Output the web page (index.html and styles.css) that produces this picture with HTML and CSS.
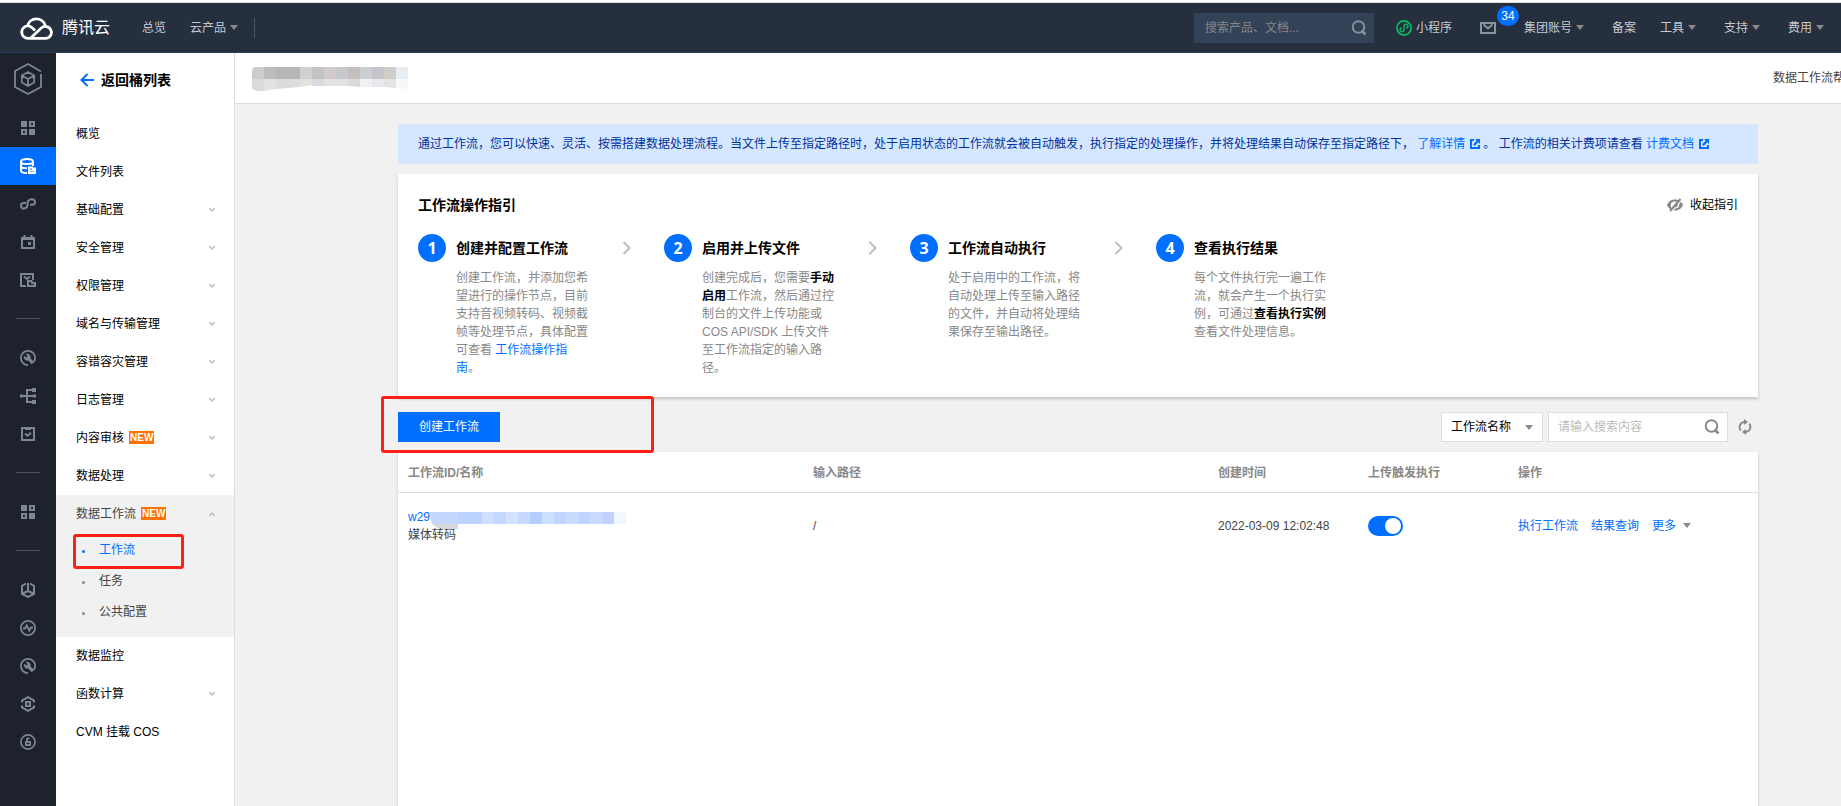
FILE: index.html
```html
<!DOCTYPE html>
<html lang="zh-CN">
<head>
<meta charset="utf-8">
<title>工作流 - 对象存储</title>
<link rel="stylesheet" href="styles.css">
</head>
<body>
<svg class="sprite" aria-hidden="true">
  <symbol id="i-grid" viewBox="0 0 16 16"><path fill="currentColor" d="M1 1h6v6H1zM9 9h6v6H9z"/><path fill="none" stroke="currentColor" stroke-width="2" d="M10 2h4v4h-4zM2 10h4v4H2z"/></symbol>
  <symbol id="i-wrench" viewBox="0 0 16 16"><path fill="none" stroke="currentColor" stroke-width="1.8" d="M8 15.1A7.1 7.1 0 1 1 15.1 8c0 1.500-.5 2.800-1.300 4"/><path fill="currentColor" d="M5.800 4 7.500 6.200 6.300 7.500 4 5.800A3.700 3.700 0 0 0 8.200 10.600l3.500 3.600 2.400-2.300-3.500-3.500A3.700 3.700 0 0 0 5.800 4z"/></symbol>
  <symbol id="i-search" viewBox="0 0 16 16"><circle cx="7.500" cy="7" r="5.800" fill="none" stroke="currentColor" stroke-width="2"/><path fill="none" stroke="currentColor" stroke-width="2.600" d="m10.500 10.500 4 4"/></symbol>
  <symbol id="i-caret" viewBox="0 0 8 5"><path fill="currentColor" d="M0 0h8L4 5z"/></symbol>
  <symbol id="i-down" viewBox="0 0 8 6"><path fill="none" stroke="currentColor" stroke-width="1.500" d="m1.300 1.300 2.700 2.700 2.700-2.700"/></symbol>
  <symbol id="i-ext" viewBox="0 0 10 10"><path fill="currentColor" d="M0 0h4v2H2v6h6V6h2v4H0zM5 0h5v5L8.300 3.300 4.700 6.900 3.100 5.300 6.700 1.700z"/></symbol>
  <symbol id="i-next" viewBox="0 0 9 14"><path fill="none" stroke="currentColor" stroke-width="1.800" d="m1.500 1 6 6-6 6"/></symbol>
</svg>

<header class="topbar">
  <a class="brand" href="#">
    <svg class="brand-mark" viewBox="0 0 33 24" fill="none" stroke="currentColor" stroke-width="2.800"><path d="M15 14.500C12.500 12 11 9.800 8 9.800a6.300 6.300 0 0 0 0 12.600h17.500a6 6 0 1 0-4.200-10.400L10.500 22.200M7.500 9.800A9.200 9.200 0 0 1 25.200 9.500"/></svg>
    <span>腾讯云</span>
  </a>
  <nav class="top-left">
    <a href="#">总览</a>
    <a href="#">云产品<svg class="caret"><use href="#i-caret"/></svg></a>
  </nav>
  <form class="top-search">
    <input type="text" aria-label="搜索" placeholder="搜索产品、文档...">
    <svg class="i16"><use href="#i-search"/></svg>
  </form>
  <nav class="top-right">
    <a class="mini" href="#"><svg class="i16" viewBox="0 0 16 16" fill="none" stroke="#07c160"><circle cx="8" cy="8" r="7.100" stroke-width="1.700"/><path stroke-width="1.300" d="M5.800 7.800a2 2 0 1 0 2.200 2V6.200a2 2 0 1 1 2.200 2"/></svg>小程序</a>
    <a class="mail" href="#" aria-label="消息"><svg class="i16" viewBox="0 0 16 16" fill="none" stroke="#8a949c" stroke-width="2"><path d="M1 3h14v10H1z"/><path d="m3.500 4.500 4.500 4 4.500-4"/></svg><b class="badge">34</b></a>
    <a href="#">集团账号<svg class="caret"><use href="#i-caret"/></svg></a>
    <a href="#">备案</a>
    <a href="#">工具<svg class="caret"><use href="#i-caret"/></svg></a>
    <a href="#">支持<svg class="caret"><use href="#i-caret"/></svg></a>
    <a href="#">费用<svg class="caret"><use href="#i-caret"/></svg></a>
  </nav>
</header>

<div class="shell">
  <nav class="rail" aria-label="产品导航">
    <a class="rail-logo" href="#" aria-label="对象存储"><svg viewBox="0 0 28 32" fill="none" stroke="currentColor" stroke-width="1.800"><path d="M27 11v13l-13 7-13-7V8l13-7 13 7.500"/><path d="m14 9 6.200 3.500v7L14 23l-6.200-3.500v-7zM7.800 12.500 14 16l6.200-3.500M14 16v7"/></svg></a>
    <a href="#" aria-label="概览"><svg class="i16"><use href="#i-grid"/></svg></a>
    <a class="on" href="#" aria-label="存储桶列表"><svg class="i16" viewBox="0 0 16 16" fill="none" stroke="currentColor" stroke-width="2"><path d="M13 8V3.500C13 2 10.500 1 7 1S1 2 1 3.500v9C1 14 3 15 7 15M1 3.500C1 5 3.500 6 7 6s6-1 6-2.500M1 8c0 1.500 2 2.300 6 2.300"/><path d="M9 9.500h3l1 1h2V15H9zM9 12.500h6"/></svg></a>
    <a href="#" aria-label="数据处理"><svg class="i16" viewBox="0 0 16 16" fill="none" stroke="currentColor" stroke-width="2"><path d="M6 7H3.500C2 7 1 8.200 1 9.700 1 11.800 2.800 13 4.700 12.400 6.700 11.800 7.500 11 7.500 9V7c0-2 1-3 3-3.600C12.800 2.800 15 3.800 15 6c0 1.700-1 2.800-2.500 2.800H10"/></svg></a>
    <a href="#" aria-label="日程"><svg class="i16" viewBox="0 0 16 16" fill="none" stroke="currentColor" stroke-width="2"><path d="M2 4h12v10H2zM2 5h12M4.500 1v3M11.500 1v3"/><path fill="currentColor" stroke="none" d="M8 8h3v3H8z"/></svg></a>
    <a href="#" aria-label="数据迁移"><svg class="i16" viewBox="0 0 16 16" fill="none" stroke="currentColor" stroke-width="2"><path d="M13 8V2H1v12h5M4 4.500 7 7l3-2.500"/><path d="M8 9h3.500L12 11h3v3H8z"/></svg></a>
    <hr>
    <a href="#" aria-label="工具"><svg class="i16"><use href="#i-wrench"/></svg></a>
    <a href="#" aria-label="拓扑"><svg class="i16" viewBox="0 0 16 16" fill="none" stroke="currentColor" stroke-width="2"><path d="M2 8h12M12 2H7v12h5"/><path fill="currentColor" stroke="none" d="M12 0h4v4h-4zM13 6.500h3v3h-3zM12 12h4v4h-4zM0 6.500h3v3H0z"/></svg></a>
    <a href="#" aria-label="检查"><svg class="i16" viewBox="0 0 16 16" fill="none" stroke="currentColor" stroke-width="2"><path d="M2 2h12v12H2zM5 3h6"/><path d="m5 7.500 2.500 2.200 3.500-3"/></svg></a>
    <hr>
    <a href="#" aria-label="应用"><svg class="i16"><use href="#i-grid"/></svg></a>
    <hr>
    <a href="#" aria-label="加速"><svg class="i16" viewBox="0 0 16 16" fill="none" stroke="currentColor" stroke-width="2"><path d="M6 1.500 2 3.800v8.200l6 3 6-3V3.800l-4-2.300M8 1v8M8 9l-5.500 2.500M8 9l5.500 2.500"/></svg></a>
    <a href="#" aria-label="监控"><svg class="i16" viewBox="0 0 16 16" fill="none" stroke="currentColor" stroke-width="1.800"><circle cx="8" cy="8" r="7.100"/><path d="M3 8.500h2l1.700-3 2.600 5L11 7.500h2"/></svg></a>
    <a href="#" aria-label="诊断"><svg class="i16"><use href="#i-wrench"/></svg></a>
    <a href="#" aria-label="容器"><svg class="i16" viewBox="0 0 16 16" fill="none" stroke="currentColor" stroke-width="2"><path d="M2 6.500v-2L8 1.200l6 3.300v2M2 9.500v2l6 3.300 6-3.300v-2"/><path d="M6 6h4v4H6z"/></svg></a>
    <a href="#" aria-label="安全"><svg class="i16" viewBox="0 0 16 16" fill="none" stroke="currentColor" stroke-width="1.700"><circle cx="8" cy="8" r="7.100"/><path d="M9.500 4.500H7v3"/><path fill="currentColor" stroke="none" d="M5 7h6v5H5z"/><path stroke="#1e222d" stroke-width="1.200" d="M6.500 9.500h3"/></svg></a>
  </nav>

  <aside class="side">
    <a class="back" href="#"><svg viewBox="0 0 14 14" fill="none" stroke="#006eff" stroke-width="2"><path d="M14 7H2M7.500 1l-6 6 6 6"/></svg>返回桶列表</a>
    <ul class="menu">
      <li><a href="#">概览</a></li>
      <li><a href="#">文件列表</a></li>
      <li><a href="#">基础配置<svg class="fold"><use href="#i-down"/></svg></a></li>
      <li><a href="#">安全管理<svg class="fold"><use href="#i-down"/></svg></a></li>
      <li><a href="#">权限管理<svg class="fold"><use href="#i-down"/></svg></a></li>
      <li><a href="#">域名与传输管理<svg class="fold"><use href="#i-down"/></svg></a></li>
      <li><a href="#">容错容灾管理<svg class="fold"><use href="#i-down"/></svg></a></li>
      <li><a href="#">日志管理<svg class="fold"><use href="#i-down"/></svg></a></li>
      <li><a href="#">内容审核<em class="new">NEW</em><svg class="fold"><use href="#i-down"/></svg></a></li>
      <li><a href="#">数据处理<svg class="fold"><use href="#i-down"/></svg></a></li>
      <li class="open"><a href="#">数据工作流<em class="new">NEW</em><svg class="fold"><use href="#i-down"/></svg></a>
        <ul class="sub">
          <li class="current"><a href="#">工作流</a><span class="mark mark-menu"></span></li>
          <li><a href="#">任务</a></li>
          <li><a href="#">公共配置</a></li>
        </ul>
      </li>
      <li><a href="#">数据监控</a></li>
      <li><a href="#">函数计算<svg class="fold"><use href="#i-down"/></svg></a></li>
      <li><a href="#">CVM 挂载 COS</a></li>
    </ul>
  </aside>

  <main class="main">
    <div class="wide">
      <div class="page-head">
        <svg class="mosaic-title" viewBox="0 0 156 24" role="img" aria-label="存储桶名称">
          <path fill="#cfcccc" d="M4 0h8v12H0V4q0-4 4-4z"/><path fill="#dcdada" d="M0 12h12v12H5q-5-1-5-5z"/>
          <path fill="#bebcbd" d="M12 0h12v12H12z"/><path fill="#b8b7b7" d="M24 0h24v12H24z"/><path fill="#cfd1cf" d="M48 0h12v12H48z"/><path fill="#c2c4c6" d="M60 0h12v12H60z"/><path fill="#d1cbcb" d="M72 0h12v12H72z"/><path fill="#c5c9cc" d="M84 0h12v12H84z"/><path fill="#c4bfbe" d="M96 0h12v12H96z"/><path fill="#cbcfd4" d="M108 0h12v12h-12z"/><path fill="#c6c4cb" d="M120 0h12v12h-12z"/><path fill="#d0ccc8" d="M132 0h12v12h-12z"/><path fill="#e8edf1" d="M144 0h12v12h-12z"/>
          <path fill="#e1e2e2" d="M12 12h12v10l-12 2z"/><path fill="#dcdcdd" d="M24 12h24v8l-24 2z"/><path fill="#e1e1de" d="M48 12h12v6l-12 2z"/><path fill="#d9dcdf" d="M60 12h12v7H60z"/><path fill="#e2e2e4" d="M72 12h24v7H72z"/><path fill="#d9d9d9" d="M96 12h12v8l-12-1z"/><path fill="#f0f1f3" d="M108 12h12v8h-12z"/><path fill="#e8e9ee" d="M120 12h12v8h-12z"/><path fill="#e4e3e2" d="M132 12h12v9l-12-1z"/><path fill="#f7f8fa" d="M144 12h12v10l-12-1z"/>
        </svg>
        <a class="help" href="#">数据工作流帮助文档</a>
      </div>

      <div class="content">
        <p class="notice">通过工作流，您可以快速、灵活、按需搭建数据处理流程。当文件上传至指定路径时，处于启用状态的工作流就会被自动触发，执行指定的处理操作，并将处理结果自动保存至指定路径下， <a href="#">了解详情<svg class="ext"><use href="#i-ext"/></svg></a>。 工作流的相关计费项请查看 <a href="#">计费文档<svg class="ext"><use href="#i-ext"/></svg></a></p>

        <section class="card guide">
          <div class="guide-head">
            <h2>工作流操作指引</h2>
            <button class="hide" type="button"><svg class="i16" viewBox="0 0 16 16"><path fill="#888" d="M8 2.500c3.700 0 6.700 2.200 8 5.500-1.300 3.300-4.300 5.500-8 5.500S1.300 11.300 0 8c1.300-3.300 4.300-5.500 8-5.500z"/><path fill="#fff" d="M8 4.500c1 0 1.500.2 2 .5L4.500 11.500A6 6 0 0 1 4 6.500C5 5 6.300 4.500 8 4.500zM11.800 6c1 2 .5 5.500-3.800 5.500-.5 0-1 0-1.300-.2z"/><path fill="none" stroke="#fff" stroke-width="1.500" d="M15 2.500 4.500 14.500"/><path fill="none" stroke="#888" stroke-width="2" d="M13.500 2 3 14M10.300 7.500 8 10"/></svg>收起指引</button>
          </div>
          <ol class="steps">
            <li>
              <span class="num">1</span><h3>创建并配置工作流</h3><svg class="next"><use href="#i-next"/></svg>
              <p>创建工作流，并添加您希望进行的操作节点，目前支持音视频转码、视频截帧等处理节点，具体配置可查看 <a href="#">工作流操作指南</a>。</p>
            </li>
            <li>
              <span class="num">2</span><h3>启用并上传文件</h3><svg class="next"><use href="#i-next"/></svg>
              <p>创建完成后，您需要<b>手动启用</b>工作流，然后通过控制台的文件上传功能或 COS API/SDK 上传文件至工作流指定的输入路径。</p>
            </li>
            <li>
              <span class="num">3</span><h3>工作流自动执行</h3><svg class="next"><use href="#i-next"/></svg>
              <p>处于启用中的工作流，将自动处理上传至输入路径的文件，并自动将处理结果保存至输出路径。</p>
            </li>
            <li>
              <span class="num">4</span><h3>查看执行结果</h3>
              <p>每个文件执行完一遍工作流，就会产生一个执行实例，可通过<b>查看执行实例</b>查看文件处理信息。</p>
            </li>
          </ol>
        </section>

        <div class="toolbar">
          <button class="primary" type="button">创建工作流</button>
          <span class="mark mark-create"></span>
          <div class="filters">
            <label class="pick"><select aria-label="筛选字段"><option>工作流名称</option></select><svg class="caret"><use href="#i-caret"/></svg></label>
            <label class="find"><input type="text" aria-label="搜索内容" placeholder="请输入搜索内容"><svg class="i16"><use href="#i-search"/></svg></label>
            <button class="refresh" type="button" aria-label="刷新"><svg class="i16" viewBox="0 0 16 16"><path fill="none" stroke="currentColor" stroke-width="1.800" d="M3.800 11.500A5.200 5.200 0 0 1 7.800 3M12.200 4.500A5.200 5.200 0 0 1 8.200 13"/><path fill="currentColor" d="M7 0l4 3-4 3zM9 10l-4 3 4 3z"/></svg></button>
          </div>
        </div>

        <section class="card list">
          <table>
            <thead><tr><th>工作流ID/名称</th><th>输入路径</th><th class="c-time">创建时间</th><th class="c-auto">上传触发执行</th><th class="c-ops">操作</th></tr></thead>
            <tbody><tr>
              <td>
                <div class="flow-id"><a href="#">w29</a><svg class="mosaic-id" viewBox="0 0 196 17" role="img" aria-label="工作流ID"><path fill="#d8d9dc" d="M2 12h26v5H15Q6 17 2 12z"/><path fill="#c4d8ff" d="M0 0h28v12H2Q0 6 0 0z"/><path fill="#bdd3ff" d="M28 0h24v12H28z"/><path fill="#cfdfff" d="M52 0h12v12H52z"/><path fill="#c5d8ff" d="M64 0h12v12H64z"/><path fill="#d2e2ff" d="M76 0h12v12H76z"/><path fill="#c8d9ff" d="M88 0h12v12H88z"/><path fill="#b3ceff" d="M100 0h12v12h-12z"/><path fill="#cbe0ff" d="M112 0h12v12h-12z"/><path fill="#c1d6ff" d="M124 0h12v12h-12z"/><path fill="#c9dcff" d="M136 0h12v12h-12z"/><path fill="#bdd5ff" d="M148 0h12v12h-12z"/><path fill="#c9daff" d="M160 0h12v12h-12z"/><path fill="#c1d2ff" d="M172 0h12v12h-12z"/><path fill="#eff7ff" d="M184 0h12v12h-12z"/></svg></div>
                <div>媒体转码</div>
              </td>
              <td>/</td>
              <td>2022-03-09 12:02:48</td>
              <td><input class="switch" type="checkbox" aria-label="上传触发执行" checked></td>
              <td><div class="ops"><a href="#">执行工作流</a><a href="#">结果查询</a><a href="#">更多<svg class="caret"><use href="#i-caret"/></svg></a></div></td>
            </tr></tbody>
          </table>
        </section>
      </div>
    </div>
  </main>
</div>
</body>
</html>
```

FILE: styles.css
```css
* { box-sizing: border-box; }

body {
  display: flex;
  flex-direction: column;
  height: 100vh;
  margin: 0;
  overflow: hidden;
  background: #fff;
  color: #000;
  font: 12px/18px "Liberation Sans", "Noto Sans CJK SC", sans-serif;
}

a { color: inherit; text-decoration: none; }
ul, ol { margin: 0; padding: 0; list-style: none; }
h2, h3, p { margin: 0; }
h2, h3 { font-size: 14px; font-weight: 700; }
button, input, select { margin: 0; padding: 0; border: 0; color: inherit; font: inherit; }
button { background: none; cursor: pointer; }
svg { display: block; flex: none; }

.sprite { position: absolute; width: 0; height: 0; }
.i16 { width: 16px; height: 16px; }
.caret { width: 8px; height: 5px; margin: 0 4px; color: #888; }

/* top bar */
.topbar {
  display: flex;
  flex: none;
  align-items: center;
  height: 51px;
  margin-top: 2px;
  padding: 0 13px 0 20px;
  border-top: 1px solid #ddd;
  border-bottom: 1px solid #2d405c;
  background: #262f3e;
  color: #c6cad0;
}
.topbar a { display: flex; align-items: center; }
.topbar .brand { gap: 9px; color: #fff; font-size: 16px; }
.brand-mark { width: 33px; height: 24px; }
.top-left {
  display: flex;
  gap: 24px;
  margin-left: 32px;
  padding-right: 12px;
  border-right: 1px solid #4a5361;
  line-height: 20px;
}
.top-search {
  display: flex;
  align-items: center;
  width: 180px;
  height: 30px;
  margin-left: auto;
  padding: 0 7px 0 11px;
  background: #344258;
  color: #86909c;
}
.top-search input { flex: 1; min-width: 0; background: none; outline: 0; }
.top-search input::placeholder { color: #86868a; opacity: 1; }
.top-right { display: flex; gap: 24px; margin-left: 22px; }
.top-right .mini { gap: 4px; }
.mail { position: relative; margin: 0 4px; }
.badge {
  position: absolute;
  top: -13px;
  left: 17px;
  width: 22px;
  height: 20px;
  border-radius: 10px;
  background: #006eff;
  color: #fff;
  font-weight: 400;
  line-height: 20px;
  text-align: center;
}

.shell { display: flex; flex: 1; min-height: 0; }

/* icon rail */
.rail { flex: none; width: 56px; background: #1e222d; color: #7d8790; }
.rail a { display: flex; align-items: center; justify-content: center; height: 38px; }
.rail .rail-logo { height: 56px; padding-bottom: 4px; }
.rail-logo svg { width: 28px; height: 32px; }
.rail .on { background: #006eff; color: #fff; }
.rail hr { width: 24px; margin: 19px auto 20px; border: 0; border-top: 1px solid #4b525c; }

/* side menu */
.side { flex: none; width: 179px; border-right: 1px solid #ddd; }
.back {
  display: flex;
  align-items: center;
  gap: 7px;
  height: 54px;
  margin-bottom: 8px;
  padding-left: 24px;
  font-size: 14px;
  font-weight: 700;
}
.back svg { width: 14px; height: 14px; }
.menu a { display: flex; align-items: center; height: 38px; padding: 0 18px 0 20px; }
.fold { width: 8px; height: 6px; margin-left: auto; color: #bbb; }
.new {
  margin: 0 0 1px 5px;
  padding: 0 1px;
  background: #ff7200;
  color: #fff;
  font-size: 10px;
  font-style: normal;
  font-weight: 700;
  line-height: 13px;
}
.open { background: #f1f1f1; color: #444; }
.open .fold { transform: rotate(180deg); }
.sub { padding: 1px 0 10px; }
.sub li { position: relative; }
.sub a { height: 31px; padding-left: 26px; }
.sub a::before { content: ""; width: 3px; height: 3px; margin: 4px 14px 0 0; border-radius: 50%; background: #888; }
.sub .current { color: #006eff; }
.sub .current a::before { background: #006eff; }

/* red highlight frames laid over the page */
.mark { position: absolute; border: 3px solid #ff2013; border-radius: 3px; pointer-events: none; }
.mark-menu { inset: 0 50px -4px 17px; }
.mark-create { top: -16px; left: -17px; width: 273px; height: 57px; }

/* main area, wider than the viewport so its right end scrolls off */
.main { flex: 1; min-width: 0; overflow: hidden; background: #f1f1f1; }
.wide { display: flex; flex-direction: column; height: 100%; margin-right: -80px; }
.page-head {
  display: flex;
  flex: none;
  align-items: center;
  justify-content: space-between;
  height: 51px;
  padding: 0 40px 0 17px;
  border-bottom: 1px solid #ddd;
  background: #fff;
  color: #444;
}
.mosaic-title { width: 156px; height: 24px; margin-top: 2px; }
.content {
  display: flex;
  flex: 1;
  flex-direction: column;
  width: 100%;
  max-width: 1400px;
  min-height: 0;
  margin: 0 auto;
  padding: 20px 20px 0;
}
.notice { margin-bottom: 10px; padding: 11px 20px; background: #d5e7ff; color: #0032a0; white-space: nowrap; }
.notice a, .steps a, .flow-id a, .ops a { color: #006eff; }
.ext { display: inline-block; width: 10px; height: 10px; margin: 0 3px 0 5px; vertical-align: -1px; }

.card { background: #fff; box-shadow: 0 2px 3px rgba(0, 0, 0, .2); }
.guide { padding: 20px; }
.guide-head { display: flex; align-items: center; justify-content: space-between; height: 22px; margin-bottom: 18px; }
.hide { display: flex; align-items: center; gap: 7px; }
.steps { display: flex; }
.steps li {
  display: grid;
  grid-template-columns: 28px 134px 1fr;
  grid-template-rows: 28px auto;
  gap: 7px 10px;
  align-items: center;
  align-content: start;
  width: 246px;
}
.steps h3 { white-space: nowrap; }
.steps p { grid-column: 2; color: #888; }
.steps b { color: #000; }
.num {
  width: 28px;
  height: 28px;
  border-radius: 50%;
  background: #006eff;
  color: #fff;
  font: 700 16px/28px "Noto Sans", sans-serif;
  text-align: center;
}
.next { width: 9px; height: 14px; margin-left: 22px; color: #bbb; }

/* toolbar */
.toolbar { position: relative; display: flex; flex: none; justify-content: space-between; height: 30px; margin: 15px 0 10px; }
.primary { padding: 0 21px; background: #006eff; color: #fff; }
.filters { display: flex; gap: 5px; }
.pick, .find { display: flex; align-items: center; border: 1px solid #ddd; background: #fff; }
.pick { position: relative; width: 102px; }
.pick select { width: 100%; height: 100%; padding-left: 9px; appearance: none; background: none; }
.pick .caret { position: absolute; right: 5px; pointer-events: none; }
.find { width: 180px; padding: 0 7px 0 9px; color: #888; }
.find input { flex: 1; min-width: 0; outline: 0; }
.find input::placeholder { color: #bbb; opacity: 1; }
.refresh { margin: 0 5px 0 4px; color: #888; }

/* workflow table */
.list { flex: 1; min-height: 0; }
table { width: 100%; border-collapse: collapse; table-layout: fixed; }
th, td { padding: 0 10px; text-align: left; }
th { height: 40px; padding-top: 2px; border-bottom: 1px solid #ddd; color: #888; font-weight: 700; }
td { padding: 15px 10px; color: #444; }
.c-time, .c-auto { width: 150px; }
.c-ops { width: 250px; }
.flow-id { display: flex; align-items: flex-start; height: 18px; }
.mosaic-id { width: 196px; height: 17px; margin-top: 4px; }
.switch {
  display: flex;
  align-items: center;
  justify-content: flex-end;
  width: 35px;
  height: 20px;
  padding: 0 2px;
  appearance: none;
  border-radius: 10px;
  background: #006eff;
}
.switch::before { content: ""; width: 16px; height: 16px; border-radius: 50%; background: #fff; }
.switch:not(:checked) { justify-content: flex-start; background: #bbb; }
.ops { display: flex; gap: 13px; }
.ops a { display: flex; align-items: center; }
.ops .caret { margin-left: 7px; }
```
